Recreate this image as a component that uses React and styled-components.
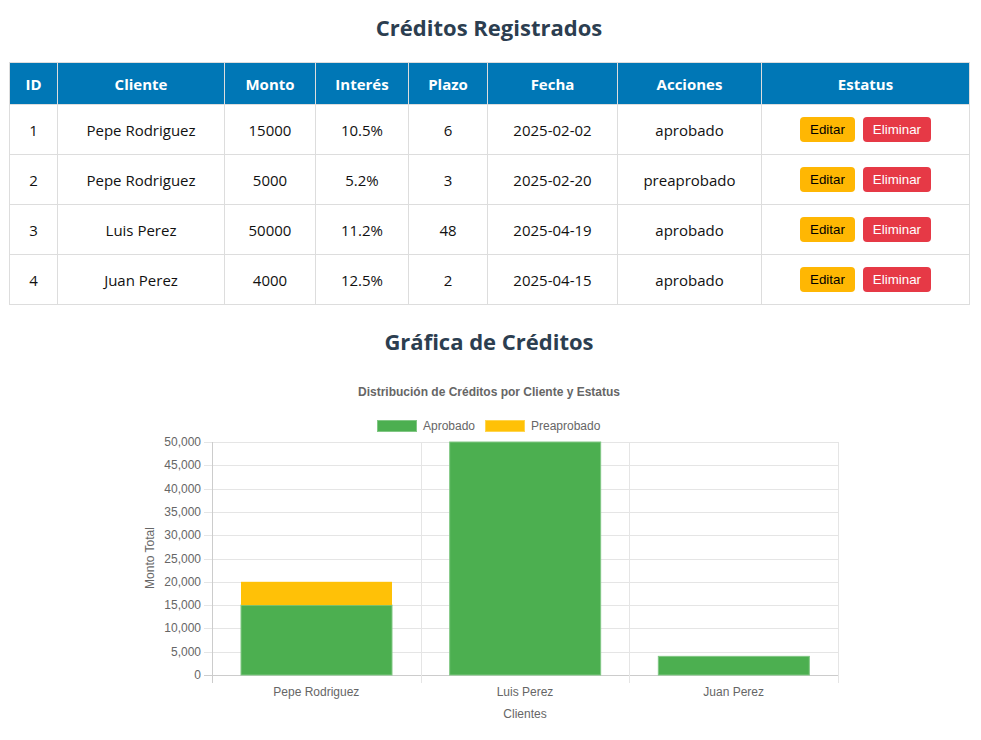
import React from "react"
import styled, { createGlobalStyle } from "styled-components"

const GlobalStyle = createGlobalStyle`
  body {
    margin: 0;
    background: #fff;
    font-family: "Open Sans", "Noto Sans", sans-serif;
  }
`

const Page = styled.div`
  width: 960px;
  margin-left: 9px;
  padding-top: 11px;
`

const Title = styled.h2`
  margin: ${(p) => p.$top || 0}px 0 ${(p) => p.$bottom || 0}px;
  height: 32px;
  line-height: 32px;
  text-align: center;
  font-size: 22px;
  font-weight: 700;
  color: #2c3e50;
`

const Table = styled.table`
  width: 960px;
  border-collapse: collapse;
  table-layout: fixed;
  font-size: 15px;
  color: #111;
`

const Th = styled.th`
  height: 41px;
  padding: 0;
  background: #0077b6;
  color: #fff;
  font-weight: 700;
  border: 1px solid #ddd;
  text-align: center;
`

const Td = styled.td`
  height: 49px;
  padding: 0;
  border: 1px solid #ddd;
  text-align: center;
`

const Actions = styled.div`
  display: flex;
  justify-content: center;
  gap: 8px;
`

const Button = styled.button`
  height: 25px;
  padding: 0 10px;
  border: none;
  border-radius: 4px;
  font-family: "Liberation Sans", Arial, sans-serif;
  font-size: 13.33px;
  cursor: pointer;
  background: ${(p) => (p.$danger ? "#e63946" : "#ffb703")};
  color: ${(p) => (p.$danger ? "#fff" : "#000")};
`

const ChartBox = styled.div`
  width: 700px;
  margin: 0 auto;
  svg {
    display: block;
  }
`

const widths = [48, 167, 91, 93, 79, 130, 144, 208]
const headers = ["ID", "Cliente", "Monto", "Interés", "Plazo", "Fecha", "Acciones", "Estatus"]

const creditos = [
  { id: 1, cliente: "Pepe Rodriguez", monto: 15000, interes: "10.5%", plazo: 6, fecha: "2025-02-02", estatus: "aprobado" },
  { id: 2, cliente: "Pepe Rodriguez", monto: 5000, interes: "5.2%", plazo: 3, fecha: "2025-02-20", estatus: "preaprobado" },
  { id: 3, cliente: "Luis Perez", monto: 50000, interes: "11.2%", plazo: 48, fecha: "2025-04-19", estatus: "aprobado" },
  { id: 4, cliente: "Juan Perez", monto: 4000, interes: "12.5%", plazo: 2, fecha: "2025-04-15", estatus: "aprobado" },
]

const grupos = [
  { nombre: "Pepe Rodriguez", aprobado: 15000, preaprobado: 5000 },
  { nombre: "Luis Perez", aprobado: 50000, preaprobado: 0 },
  { nombre: "Juan Perez", aprobado: 4000, preaprobado: 0 },
]

// plot area in page coordinates (the viewBox starts at 139,372)
const L = 212
const R = 838
const T = 442
const B = 675
const y = (v) => B - (v / 50000) * (B - T)
const slot = (R - L) / 3
const ticks = [0, 5000, 10000, 15000, 20000, 25000, 30000, 35000, 40000, 45000, 50000]
const txt = { fontFamily: "'Liberation Sans', Arial, sans-serif", fill: "#666" }

const Chart = () => (
  <svg width="700" height="360" viewBox="139 372 700 360">
    <text x="489" y="396" textAnchor="middle" fontSize="12" fontWeight="700" {...txt}>
      Distribución de Créditos por Cliente y Estatus
    </text>
    <rect x="377.5" y="420.5" width="39" height="11" fill="#4caf50" stroke="#81c784" />
    <text x="423" y="430" fontSize="12" {...txt}>Aprobado</text>
    <rect x="485.5" y="420.5" width="39" height="11" fill="#ffc107" stroke="#ffd54f" />
    <text x="531" y="430" fontSize="12" {...txt}>Preaprobado</text>

    {ticks.map((t) => (
      <g key={t}>
        <line x1={L - 8} x2={R} y1={Math.round(y(t)) + 0.5} y2={Math.round(y(t)) + 0.5} stroke={t === 0 ? "#ccc" : "#e5e5e5"} />
        <text x={L - 11} y={y(t) + 4} textAnchor="end" fontSize="12" {...txt}>
          {t.toLocaleString("en-US")}
        </text>
      </g>
    ))}
    {[0, 1, 2, 3].map((i) => (
      <line key={i} x1={Math.round(L + i * slot) + 0.5} x2={Math.round(L + i * slot) + 0.5} y1={T} y2={B + 8} stroke={i === 0 ? "#ccc" : "#e5e5e5"} />
    ))}

    {grupos.map((g, i) => {
      const x0 = L + i * slot + 29
      const w = 151
      return (
        <g key={g.nombre}>
          <rect x={x0} y={y(g.aprobado)} width={w} height={B - y(g.aprobado)} fill="#4caf50" stroke="#81c784" strokeWidth="1" />
          {g.preaprobado > 0 && (
            <rect
              x={x0}
              y={y(g.aprobado + g.preaprobado)}
              width={w}
              height={y(g.aprobado) - y(g.aprobado + g.preaprobado)}
              fill="#ffc107"
            />
          )}
          <text x={L + i * slot + slot / 2} y="696" textAnchor="middle" fontSize="12" {...txt}>
            {g.nombre}
          </text>
        </g>
      )
    })}

    <text x="525" y="718" textAnchor="middle" fontSize="12" {...txt}>Clientes</text>
    <text transform="translate(154 558) rotate(-90)" textAnchor="middle" fontSize="12" {...txt}>
      Monto Total
    </text>
  </svg>
)

export default function App() {
  return (
    <>
      <GlobalStyle />
      <Page>
        <Title $bottom={19}>Créditos Registrados</Title>
        <Table>
          <colgroup>
            {widths.map((w, i) => (
              <col key={i} style={{ width: w }} />
            ))}
          </colgroup>
          <thead>
            <tr>
              {headers.map((h) => (
                <Th key={h}>{h}</Th>
              ))}
            </tr>
          </thead>
          <tbody>
            {creditos.map((c) => (
              <tr key={c.id}>
                <Td>{c.id}</Td>
                <Td>{c.cliente}</Td>
                <Td>{c.monto}</Td>
                <Td>{c.interes}</Td>
                <Td>{c.plazo}</Td>
                <Td>{c.fecha}</Td>
                <Td>{c.estatus}</Td>
                <Td>
                  <Actions>
                    <Button>Editar</Button>
                    <Button $danger>Eliminar</Button>
                  </Actions>
                </Td>
              </tr>
            ))}
          </tbody>
        </Table>
        <Title $top={20} $bottom={15}>Gráfica de Créditos</Title>
        <ChartBox>
          <Chart />
        </ChartBox>
      </Page>
    </>
  )
}
